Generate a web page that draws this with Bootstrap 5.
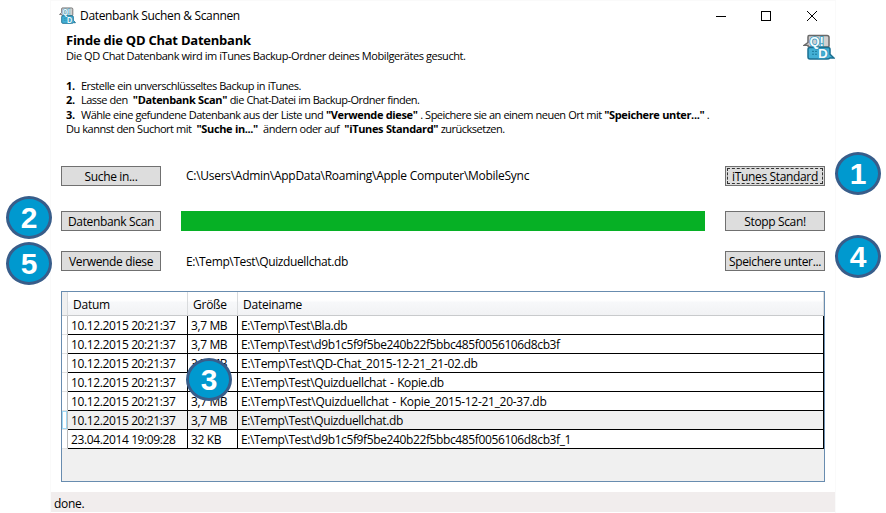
<!DOCTYPE html>
<html lang="de">
<head>
<meta charset="utf-8">
<meta name="viewport" content="width=device-width, initial-scale=1">
<title>Datenbank Suchen &amp; Scannen</title>
<link href="https://cdn.jsdelivr.net/npm/bootstrap@5.3.0/dist/css/bootstrap.min.css" rel="stylesheet">
<style>
body{font-family:"Open Sans","Noto Sans",sans-serif;font-size:12px;line-height:16px;color:#000;background:#fff;height:513px;overflow:hidden;letter-spacing:-.38px}
.app-window{width:786px;height:513px;margin-left:50px;background:#fff;border:1px solid #fafafa;border-width:1px 1px 0}
.title-bar{height:29px;padding:0 18px 0 8px}
.app-title{letter-spacing:-.33px}
.intro{height:136px;padding:0 0 0 15px}
.intro h1{font-size:13px;line-height:16px;font-weight:700;letter-spacing:-.24px}
.intro .desc{font-size:11px;line-height:15px;letter-spacing:-.43px}
.intro .text-block{padding-top:2px}
.steps{margin-top:16px;font-size:11px;line-height:14.4px;letter-spacing:-.5px;word-spacing:.2px;white-space:pre}
.steps b{letter-spacing:-.36px}
.steps .num{display:inline-block;width:15px}
.ctl-row{padding:0 10px;height:20px}
.scan-row{margin-top:25px}
.use-row{margin-top:20px}
.win-btn{width:100px;height:20px;padding:0;border:1px solid #707070;border-radius:0;background:#ddd;color:#000;font-size:12px;line-height:20px;letter-spacing:-.35px;white-space:nowrap}
.win-btn.focused{outline:1px dashed #333;outline-offset:-3px}
.path{margin-left:25px}
.path.folder{letter-spacing:-.28px}
.path.file{padding-top:2px}
.scan{height:20px;margin:0 20px;border-radius:0;background:#e6e6e6}
.scan .progress-bar{background:#06b025}
.data-grid{height:191px;margin:20px 10px 0;border:1px solid #688caf;background:#f0f0f0}
.grid-line{display:grid;grid-template-columns:6px 120px 50px 586px;height:19px;line-height:20px;white-space:nowrap}
.grid-line>span{height:19px;background:#fff;border-right:1px solid #000;border-bottom:1px solid #000;padding-left:3px}
.grid-line>span:last-child{word-spacing:1px}
.grid-line>span:first-child{border-right-color:#bbb;border-bottom-color:#e2e2e2;padding:0}
.grid-line>span.stamped{letter-spacing:-.29px}
.grid-line.current>span{background:#f0f0f0}
.grid-line.current>span:first-child{background:#fff;box-shadow:inset 0 0 0 1px #9fd8f5}
.grid-line.head{height:24px;line-height:25px;letter-spacing:-.25px}
.grid-line.head>span{height:24px;background:linear-gradient(#fff 0 35%,#f7f8fa 45%,#f1f2f4);border-right-color:#d9dbdd;border-bottom-color:#c8cacc;padding-left:5px}
.grid-line.head>span:first-child{background:#f0f0f0;padding:0}
.status{height:20px;margin-top:10px;padding:4px 3px 0;background:#f1eded;letter-spacing:-.3px}
.step-badge{position:absolute;width:46px;height:43px;border:3px solid #385d8a;border-radius:50%;background:#0099cf;color:#fff;font:bold 30px/38px "Liberation Sans",Arial,sans-serif;text-align:center;letter-spacing:0}
.b1{left:835px;top:152px}.b2{left:6px;top:196px}.b3{left:186px;top:358px}.b4{left:835px;top:235px}.b5{left:6px;top:242px}
</style>
<script src="https://cdn.jsdelivr.net/npm/bootstrap@5.3.0/dist/js/bootstrap.bundle.min.js"></script>
</head>
<body class="position-relative">
<svg class="d-none"><symbol id="qd" viewBox="0 0 32 27">
<path d="M6 1.500h18q2 0 2 2v9q0 1-1 1H6q-1 0-1-1v-.7H1l4-3V3q0-1.500 1-1.500z" fill="#d0d0d0" stroke="#696969" stroke-width="1.500"/>
<path d="M7 14h18q2 0 2 2v5l4 4h-4q-1 1-3 1H7q-2 0-2-2v-8q0-2 2-2z" fill="#43b0d5" stroke="#1b6f91" stroke-width="1.500"/>
<g font-family="Liberation Sans, sans-serif" font-weight="bold" letter-spacing="0" fill="#f4fbfd" stroke="#2f97be" stroke-width="1.600" paint-order="stroke"><text x="6.500" y="12" font-size="13">Q!</text><text x="15" y="25" font-size="13.500">D</text></g>
<path d="M9 18h2m1 0h2m-5 3h2m1 0h2" stroke="#1c7799"/>
</symbol></svg>
<main class="app-window">
<header class="title-bar d-flex align-items-center">
<svg width="17" height="17" viewBox="0 0 32 27" preserveAspectRatio="none"><use href="#qd" width="32" height="27"/></svg>
<span class="app-title ms-1">Datenbank Suchen &amp; Scannen</span>
<svg class="ms-auto" width="102" height="12" fill="none" stroke="#000" shape-rendering="crispEdges"><path d="M1 6.500h10M46.500 1.500h9v9h-9z"/><path d="M92 1l10 10m0-10L92 11" shape-rendering="auto"/></svg>
</header>
<section class="intro d-flex">
<div class="text-block">
<h1 class="m-0">Finde die QD Chat Datenbank</h1>
<p class="desc m-0">Die QD Chat Datenbank wird im iTunes Backup-Ordner deines Mobilgerätes gesucht.</p>
<div class="steps"><div><b class="num">1.</b>Erstelle ein unverschlüsseltes Backup in iTunes.</div><div><b class="num">2.</b>Lasse den  <b>"Datenbank Scan"</b> die Chat-Datei im Backup-Ordner finden.</div><div><b class="num">3.</b>Wähle eine gefundene Datenbank aus der Liste und <b>"Verwende diese"</b> . Speichere sie an einem neuen Ort mit <b>"Speichere unter..."</b> .</div><div>Du kannst den Suchort mit  <b>"Suche in..."</b>  ändern oder auf  <b>"iTunes Standard"</b> zurücksetzen.</div></div>
</div>
<svg class="ms-auto mt-1" width="32" height="26" viewBox="0 0 32 27" preserveAspectRatio="none"><use href="#qd" width="32" height="27"/></svg>
</section>
<div class="ctl-row d-flex align-items-center"><button class="btn win-btn">Suche in...</button><span class="path folder">C:\Users\Admin\AppData\Roaming\Apple Computer\MobileSync</span><button class="btn win-btn focused ms-auto">iTunes Standard</button></div>
<div class="ctl-row scan-row d-flex"><button class="btn win-btn">Datenbank Scan</button><div class="progress scan flex-grow-1"><div class="progress-bar w-100"></div></div><button class="btn win-btn">Stopp Scan!</button></div>
<div class="ctl-row use-row d-flex align-items-center"><button class="btn win-btn">Verwende diese</button><span class="path file">E:\Temp\Test\Quizduellchat.db</span><button class="btn win-btn ms-auto">Speichere unter...</button></div>
<section class="data-grid">
<div class="grid-line head"><span></span><span>Datum</span><span>Größe</span><span>Dateiname</span></div>
<div class="grid-line"><span></span><span>10.12.2015 20:21:37</span><span>3,7 MB</span><span>E:\Temp\Test\Bla.db</span></div>
<div class="grid-line"><span></span><span>10.12.2015 20:21:37</span><span>3,7 MB</span><span>E:\Temp\Test\d9b1c5f9f5be240b22f5bbc485f0056106d8cb3f</span></div>
<div class="grid-line"><span></span><span>10.12.2015 20:21:37</span><span>3,7 MB</span><span class="stamped">E:\Temp\Test\QD-Chat_2015-12-21_21-02.db</span></div>
<div class="grid-line"><span></span><span>10.12.2015 20:21:37</span><span>3,7 MB</span><span>E:\Temp\Test\Quizduellchat - Kopie.db</span></div>
<div class="grid-line"><span></span><span>10.12.2015 20:21:37</span><span>3,7 MB</span><span class="stamped">E:\Temp\Test\Quizduellchat - Kopie_2015-12-21_20-37.db</span></div>
<div class="grid-line current"><span></span><span>10.12.2015 20:21:37</span><span>3,7 MB</span><span>E:\Temp\Test\Quizduellchat.db</span></div>
<div class="grid-line"><span></span><span>23.04.2014 19:09:28</span><span>32 KB</span><span>E:\Temp\Test\d9b1c5f9f5be240b22f5bbc485f0056106d8cb3f_1</span></div>
</section>
<footer class="status">done.</footer>
</main>
<span class="step-badge b1">1</span><span class="step-badge b2">2</span><span class="step-badge b3">3</span><span class="step-badge b4">4</span><span class="step-badge b5">5</span>
</body>
</html>
